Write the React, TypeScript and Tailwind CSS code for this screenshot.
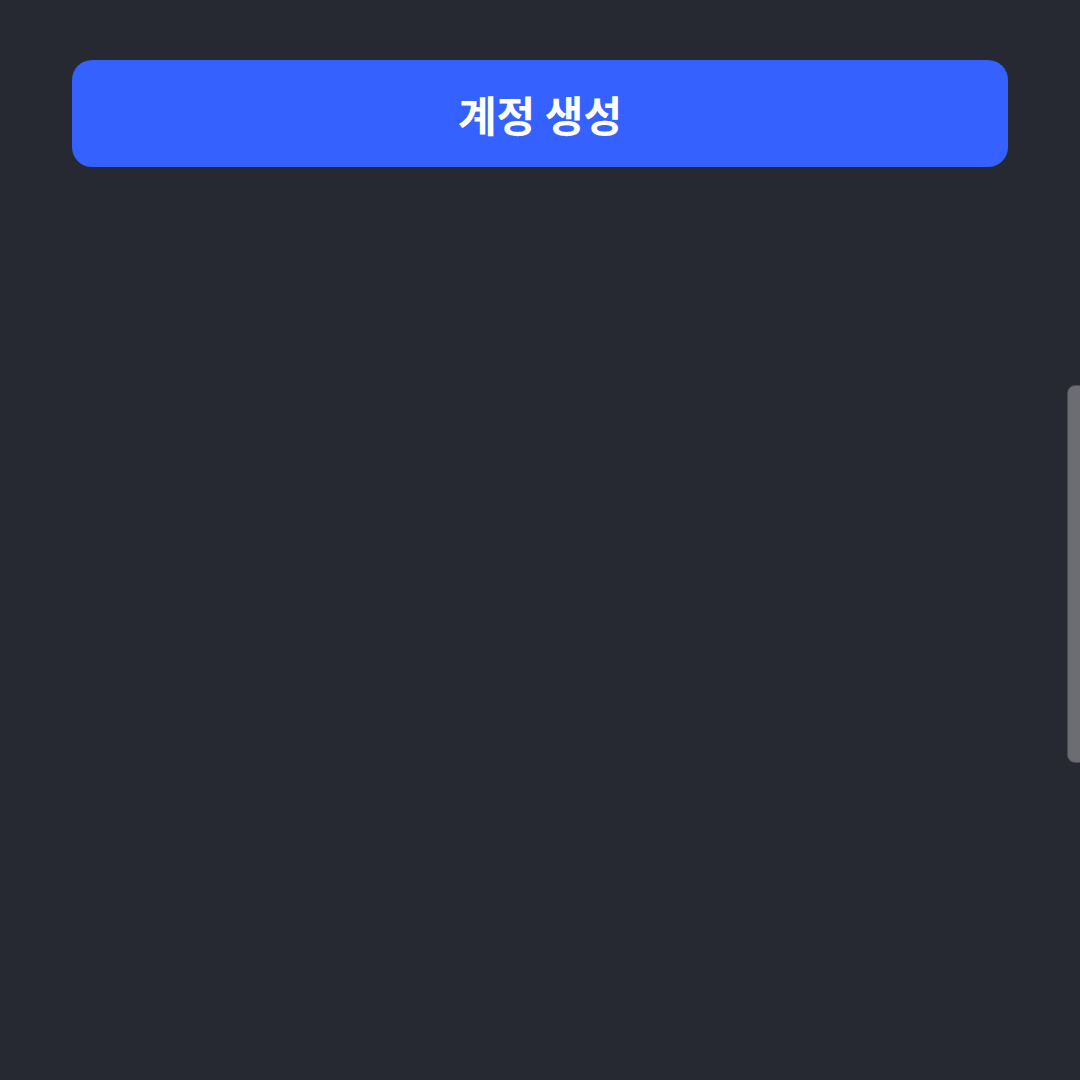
import React from "react";

export default function App() {
  return (
    <div className="relative w-[1080px] h-[1080px] overflow-hidden bg-[#262932]" style={{ fontFamily: '"Noto Sans CJK KR", "Noto Sans", sans-serif' }}>
      <div className="px-[72px] pt-[60px]">
        <button className="w-full h-[107px] rounded-[20px] bg-[#3461ff] flex items-center justify-center text-white text-[42px] leading-none font-bold">
          계정 생성
        </button>
      </div>
      <div className="absolute left-[1067px] top-[385px] w-[20px] h-[378px] rounded-[8px] bg-[#6b6d72] border border-[#4a4c52]" />
    </div>
  );
}
